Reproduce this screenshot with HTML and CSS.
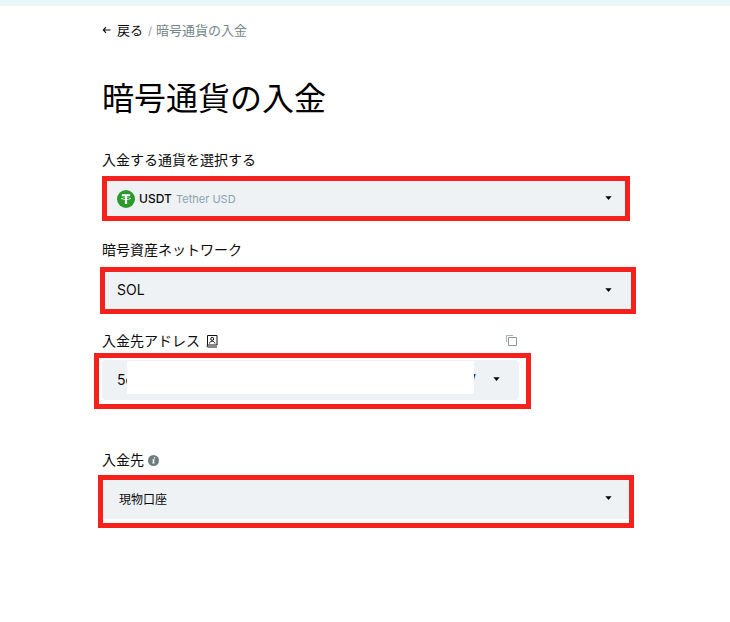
FILE: index.html
```html
<!DOCTYPE html>
<html lang="ja">
<head>
<meta charset="utf-8">
<meta name="viewport" content="width=device-width, initial-scale=1">
<title>暗号通貨の入金</title>
<link rel="stylesheet" href="styles.css">
</head>
<body>
<div class="strip"></div>
<main class="page">
  <nav class="crumbs">
    <a class="back" href="#">
      <svg width="9" height="8" viewBox="0 0 9 8" fill="none" stroke="currentColor" stroke-width="1.1"><path d="M8.500 4H1.500M4 1.200L1.300 4 4 6.800"/></svg>
      戻る</a>
    <span class="slash">/</span>
    <span class="current">暗号通貨の入金</span>
  </nav>
  <h1>暗号通貨の入金</h1>

  <form>
    <div class="field">
      <label for="coin">入金する通貨を選択する</label>
      <div class="frame frame-coin">
        <select id="coin" class="control"><option>USDT</option></select>
        <span class="coin">
          <svg width="18" height="18" viewBox="0 0 18 18"><circle cx="9" cy="9" r="9" fill="#2b9a2b"/><path d="M4.800 4.200h8.400v2h-3.100v1.200c2.300.1 4 .6 4 1.200s-1.700 1.100-4 1.200v4.100H7.900V9.800c-2.300-.1-4-.6-4-1.200s1.700-1.100 4-1.200V6.200H4.800z" fill="#fff"/><path d="M7.900 8v1c-1.600-.1-2.900-.3-2.900-.5s1.300-.4 2.900-.5zm2.200 0v1c1.600-.1 2.900-.3 2.900-.5s-1.300-.4-2.900-.5z" fill="#2b9a2b"/></svg>
        </span>
        <span class="hint">Tether USD</span>
        <svg class="caret" width="7" height="4" viewBox="0 0 7 4"><path d="M.4.300h6.200L3.500 3.900z"/></svg>
      </div>
    </div>

    <div class="field">
      <label for="network">暗号資産ネットワーク</label>
      <div class="frame frame-network">
        <select id="network" class="control"><option>SOL</option></select>
        <svg class="caret" width="7" height="4" viewBox="0 0 7 4"><path d="M.4.300h6.200L3.500 3.900z"/></svg>
      </div>
    </div>

    <div class="field field-address">
      <div class="label-row label-row-address">
        <label for="address">入金先アドレス</label>
        <svg width="12" height="14" viewBox="0 0 12 14" fill="none" stroke="#111"><path d="M1.500 11V1.500h9.500v9.500H2a1 1 0 0 0 0 2h9"/><circle cx="6.200" cy="4.900" r="1.500"/><path d="M3.500 9.500c0-3 5.400-3 5.400 0"/></svg>
        <button class="copy" type="button" aria-label="コピー">
          <svg width="12" height="12" viewBox="0 0 12 12" fill="none"><path d="M.5 7V.5H7" stroke="#a9b3b5"/><path d="M2.500 2.500h8v8h-8z" stroke="#8a9698"/></svg>
        </button>
      </div>
      <div class="frame frame-address">
        <div class="address">
          <select id="address" class="control"><option>5c</option></select>
          <span class="tail">V</span>
          <span class="mask"></span>
          <svg class="caret" width="7" height="4" viewBox="0 0 7 4"><path d="M.4.300h6.200L3.500 3.900z"/></svg>
        </div>
      </div>
    </div>

    <div class="field field-account">
      <div class="label-row">
        <label for="account">入金先</label>
        <svg width="11" height="11" viewBox="0 0 11 11"><circle cx="5.500" cy="5.500" r="5.500" fill="#6d7c7f"/><path d="M6 2.200h1.300L7 3.500H5.700zM4.500 4.300h2.200L6 7.600h.7l-.2.900H4.300L5 5.200h-.7z" fill="#fff"/></svg>
      </div>
      <div class="frame frame-account">
        <select id="account" class="control"><option>現物口座</option></select>
        <svg class="caret" width="7" height="4" viewBox="0 0 7 4"><path d="M.4.300h6.200L3.500 3.900z"/></svg>
      </div>
    </div>
  </form>
</main>
</body>
</html>
```
FILE: styles.css
```css
* { box-sizing: border-box; }

body {
  margin: 0;
  background: #fff;
  color: #0b0b0b;
  font-family: Inter, "Noto Sans CJK JP", sans-serif;
  font-size: 14px;
  line-height: 20px;
}

svg { display: block; flex: none; }

.strip { height: 6px; background: #eaf8f8; }

.page { padding: 14px 100px 40px 102px; }

.crumbs {
  display: flex;
  align-items: center;
  font-size: 13px;
}

.back {
  display: flex;
  align-items: center;
  gap: 6px;
  color: #0b0b0b;
  text-decoration: none;
}

.slash { margin: 2px 4px 0 5px; font-size: 11px; line-height: 18px; color: #8d999c; }
.current { color: #75868a; }

h1 {
  margin: 39px 0 31px;
  font-size: 32px;
  line-height: 40px;
  font-weight: 400;
  color: #000;
}

.field { margin-bottom: 19px; }
.field label { display: block; }
.field-address { margin: -2px 0 41px; }

.label-row { display: flex; align-items: center; gap: 4px; }
.label-row-address { gap: 6px; }

.copy {
  margin: 0 112px 0 auto;
  padding: 0;
  border: 0;
  background: none;
}

/* Red highlight around each control */
.frame {
  position: relative;
  display: flex;
  border: 5px solid #f5211d;
}

.frame-coin { height: 45px; margin-top: 6px; }
.frame-network { height: 47px; margin: 7px -6px 0 -2px; }
.frame-address { height: 56px; margin: 2px 99px 0 -8px; padding: 2px 7px 4px 3px; }
.frame-account { height: 53px; margin: 5px -4px 0; padding-bottom: 4px; }

.control {
  flex: 1;
  min-width: 0;
  border: 0;
  border-radius: 0;
  padding: 0 30px 0 15px;
  appearance: none;
  background: #eef2f5;
  color: #0b0b0b;
  font: inherit;
}

.frame-coin .control { padding-left: 32px; font-size: 12px; font-weight: 500; }
.frame-network .control { padding: 0 30px 2px 12px; }
.frame-account .control { padding-left: 16px; font-size: 12px; }

.caret {
  position: absolute;
  top: 15px;
  right: 13px;
  pointer-events: none;
}

.frame-network .caret { top: 16px; right: 19px; }
.frame-account .caret { top: 16px; right: 17px; }

.coin, .hint { position: absolute; pointer-events: none; }
.coin { top: 9px; left: 10px; }
.hint { top: 8px; left: 69px; font-size: 11px; color: #8fa1ae; }

.address { position: relative; display: flex; flex: 1; }
.address .control { border-radius: 4px; }
.address .caret { top: 17px; right: 19px; }

/* Blanked-out middle of the address */
.mask {
  position: absolute;
  top: 1px;
  left: 25px;
  right: 45px;
  height: 33px;
  background: #fff;
}

.tail { position: absolute; top: 10px; right: 43px; }
```
